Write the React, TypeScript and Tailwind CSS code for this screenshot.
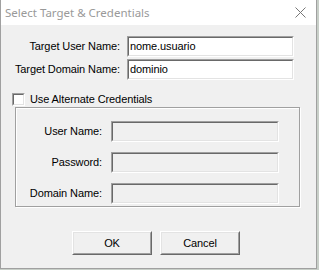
import React from 'react';

function Sunken({ disabled, children, className }: { disabled?: boolean; children?: React.ReactNode; className: string }) {
  return (
    <div className={`border border-t-[#a0a0a0] border-l-[#a0a0a0] border-b-white border-r-white ${className}`}>
      <div
        className={`h-full border border-t-[#696969] border-l-[#696969] border-b-[#e3e3e3] border-r-[#e3e3e3] flex items-center pl-[1px] ${disabled ? 'bg-[#f0f0f0]' : 'bg-white'}`}
      >
        {children}
      </div>
    </div>
  );
}

function Button({ label }: { label: string }) {
  return (
    <button
      type="button"
      className="w-[80px] h-[24px] border border-t-white border-l-white border-b-[#696969] border-r-[#696969] bg-[#f0f0f0] p-0"
    >
      <div className="h-full border border-t-[#e3e3e3] border-l-[#e3e3e3] border-b-[#a0a0a0] border-r-[#a0a0a0] flex items-center justify-center text-[11px] text-black">
        {label}
      </div>
    </button>
  );
}

export default function App() {
  return (
    <div className="w-[319px] h-[270px] bg-[#c8cfc8] overflow-hidden" style={{ fontFamily: '"Liberation Sans", Arial, sans-serif' }}>
      <div className="w-[317px] h-[269px] bg-[#f0f0f0] border-l border-r border-b border-[#a0a0a0] flex flex-col">
        {/* title bar */}
        <div className="h-[25px] bg-white flex items-center justify-between pl-[4px] pr-[8px]">
          <span className="text-[11.5px] text-[#999999]" style={{ fontFamily: '"Noto Sans", sans-serif' }}>
            Select Target &amp; Credentials
          </span>
          <svg width="11" height="11" viewBox="0 0 11 11" className="mr-[2px]">
            <path d="M0.5 0.5 L10.5 10.5 M10.5 0.5 L0.5 10.5" stroke="#777" strokeWidth="1" />
          </svg>
        </div>

        <div className="flex flex-col pt-[11px] text-[11px] text-black tracking-[-0.1px]">
          <div className="flex items-center">
            <div className="w-[119px] text-right">Target User Name:</div>
            <Sunken className="ml-[7px] w-[167px] h-[21px]">nome.usuario</Sunken>
          </div>
          <div className="flex items-center mt-[2px]">
            <div className="w-[119px] text-right">Target Domain Name:</div>
            <Sunken className="ml-[7px] w-[167px] h-[21px]">dominio</Sunken>
          </div>

          <div className="flex items-center mt-[13px] ml-[11px] h-[13px]">
            <Sunken className="w-[13px] h-[13px]" />
            <span className="ml-[5px]">Use Alternate Credentials</span>
          </div>

          <div className="ml-[14px] mt-[1px] w-[285px] h-[100px] border border-[#a0a0a0] shadow-[inset_1px_1px_0_#fff,1px_1px_0_#fff] flex flex-col pt-[13px] gap-[10px]">
            <div className="flex items-center">
              <div className="w-[86px] text-right">User Name:</div>
              <Sunken disabled className="ml-[9px] w-[168px] h-[21px]" />
            </div>
            <div className="flex items-center">
              <div className="w-[86px] text-right">Password:</div>
              <Sunken disabled className="ml-[9px] w-[168px] h-[21px]" />
            </div>
            <div className="flex items-center">
              <div className="w-[86px] text-right">Domain Name:</div>
              <Sunken disabled className="ml-[9px] w-[168px] h-[21px]" />
            </div>
          </div>

          <div className="flex gap-[8px] ml-[71px] mt-[24px]">
            <Button label="OK" />
            <Button label="Cancel" />
          </div>
        </div>
      </div>
    </div>
  );
}
